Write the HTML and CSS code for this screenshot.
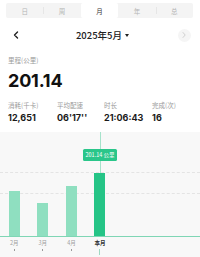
FILE: index.html
```html
<!DOCTYPE html>
<html lang="zh">
<head>
<meta charset="utf-8">
<link rel="stylesheet" href="styles.css">
</head>
<body>
<div class="tabs">
  <div class="tab">日</div>
  <div class="tab sep">周</div>
  <div class="tab active">月</div>
  <div class="tab">年</div>
  <div class="tab sep">总</div>
</div>
<div class="nav">
  <span class="prev"><svg width="6" height="8" viewBox="0 0 6 8"><path d="M4.5 1 L1.5 4 L4.5 7" fill="none" stroke="#222" stroke-width="1.4" stroke-linecap="round" stroke-linejoin="round"/></svg></span>
  <div class="title">2025年5月<span class="caret"></span></div>
  <span class="next"><svg width="6" height="8" viewBox="0 0 6 8"><path d="M2 1.5 L4.2 4 L2 6.5" fill="none" stroke="#d0d0d0" stroke-width="1" stroke-linecap="round" stroke-linejoin="round"/></svg></span>
</div>
<section class="summary">
  <div class="label">里程(公里)</div>
  <div class="big">201.14</div>
  <div class="stats">
    <div class="stat"><div class="label">消耗(千卡)</div><div class="value">12,651</div></div>
    <div class="stat"><div class="label">平均配速</div><div class="value">06'17''</div></div>
    <div class="stat"><div class="label">时长</div><div class="value">21:06:43</div></div>
    <div class="stat"><div class="label">完成(次)</div><div class="value">16</div></div>
  </div>
</section>
<section class="chart">
  <div class="plot">
    <div class="gridline g1"></div>
    <div class="gridline g2"></div>
    <div class="bars">
      <div class="col"><div class="bar" style="height:45px"></div></div>
      <div class="col"><div class="bar" style="height:33px"></div></div>
      <div class="col"><div class="bar" style="height:50px"></div></div>
      <div class="col current"><div class="bar" style="height:63px"></div></div>
      <div class="col"></div>
      <div class="col"></div>
      <div class="col"></div>
    </div>
    <div class="tip-line"></div>
    <div class="tooltip">201.14 公里</div>
  </div>
  <div class="axis">
    <div class="tick">2月<i></i></div>
    <div class="tick">3月<i></i></div>
    <div class="tick">4月<i></i></div>
    <div class="tick now">本月<i></i></div>
    <div class="tick"></div>
    <div class="tick"></div>
    <div class="tick"></div>
  </div>
</section>
</body>
</html>
```
FILE: styles.css
```css
* { box-sizing: border-box; }
html, body { margin: 0; padding: 0; background: #fff; }
body {
  width: 200px;
  height: 257px;
  overflow: hidden;
  font-family: "Noto Sans CJK SC", "Noto Sans", sans-serif;
  color: #222;
}
.tabs {
  margin: 3px 7px 0 6px;
  height: 15px;
  background: #f4f4f4;
  border-radius: 2px;
  display: grid;
  grid-template-columns: repeat(5, 1fr);
}
.tab {
  position: relative;
  display: flex;
  align-items: center;
  justify-content: center;
  font-size: 6.5px;
  color: #b4b4b4;
}
.tab.sep::before {
  content: "";
  position: absolute;
  left: 0;
  top: 4px;
  height: 7px;
  border-left: 1px solid #e6e6e6;
}
.tab.active {
  background: #fff;
  color: #333;
  border-radius: 2px;
}
.nav {
  height: 34px;
  display: flex;
  align-items: center;
  justify-content: space-between;
  padding: 0 9px 0 13px;
}
.prev { display: flex; width: 6px; }
.next {
  width: 13px;
  height: 13px;
  border-radius: 50%;
  background: #f5f5f5;
  display: flex;
  align-items: center;
  justify-content: center;
}
.title {
  font-size: 9.5px;
  font-weight: 500;
  color: #222;
  display: flex;
  align-items: center;
  margin-left: 8px;
}
.caret {
  margin-left: 3px;
  width: 0;
  height: 0;
  border-left: 2.5px solid transparent;
  border-right: 2.5px solid transparent;
  border-top: 3.5px solid #222;
}
.summary { padding: 3px 0 0 8px; }
.label {
  font-size: 6.5px;
  line-height: 10px;
  color: #9a9a9a;
  white-space: nowrap;
}
.big {
  margin-top: 5px;
  font-family: "Inter", "Noto Sans", sans-serif;
  font-weight: 700;
  font-size: 18px;
  line-height: 22px;
  color: #111;
  letter-spacing: -0.2px;
}
.stats {
  margin-top: 8px;
  display: grid;
  grid-template-columns: 49px 47px 48px 1fr;
}
.value {
  margin-top: 2px;
  font-family: "Inter", "Noto Sans", sans-serif;
  font-weight: 700;
  font-size: 9px;
  line-height: 12px;
  color: #1a1a1a;
}
.chart {
  margin-top: 8px;
  height: 125px;
  background: #f8f8f8;
}
.plot {
  position: relative;
  height: 105px;
  border-bottom: 1px solid #7fd6b5;
}
.gridline {
  position: absolute;
  left: 0;
  right: 0;
  border-top: 1px dashed #e4e4e4;
}
.g1 { top: 40px; }
.g2 { top: 61px; }
.bars {
  position: absolute;
  left: 0;
  right: 0;
  bottom: 0;
  height: 100%;
  display: grid;
  grid-template-columns: repeat(7, 1fr);
  align-items: end;
}
.col { display: flex; justify-content: center; align-items: flex-end; height: 100%; }
.bar { width: 11px; background: #8fdfc0; }
.col.current .bar { background: #25c486; }
.tip-line {
  position: absolute;
  left: 100px;
  top: 0;
  height: 41px;
  border-left: 1px solid #a6e3cb;
}
.tooltip {
  position: absolute;
  left: 83px;
  top: 17px;
  width: 34px;
  height: 12px;
  background: #2ac68a;
  border-radius: 1.5px;
  color: #fff;
  font-size: 5.5px;
  line-height: 12px;
  text-align: center;
  white-space: nowrap;
}
.axis {
  display: grid;
  grid-template-columns: repeat(7, 1fr);
}
.tick {
  position: relative;
  height: 20px;
  padding-top: 2px;
  text-align: center;
  font-size: 5.5px;
  line-height: 8px;
  color: #a0a0a0;
}
.tick i {
  display: block;
  margin: 2px auto 0;
  width: 1px;
  height: 1.5px;
  background: #9a9a9a;
}
.tick.now { color: #333; font-weight: 700; }
.tick.now i {
  margin-top: 2px;
  height: 6px;
  background: #9fd9c2;
}
```
